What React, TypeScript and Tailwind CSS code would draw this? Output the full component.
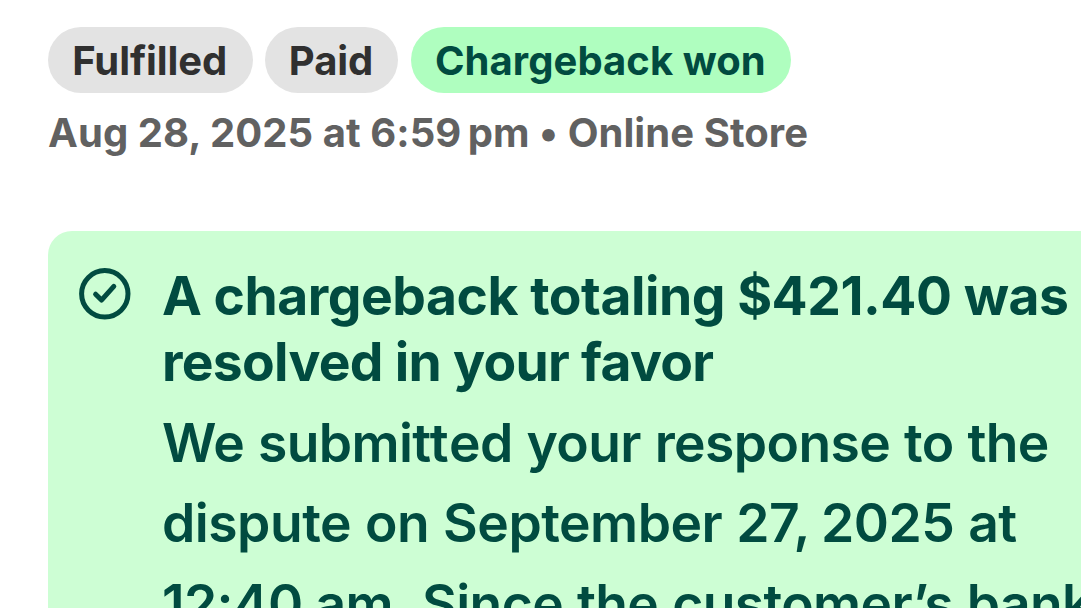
const badges = [
  { label: "Fulfilled", className: "w-[204.5px] bg-[#e3e3e3] text-[#303030] tracking-[-0.1px]" },
  { label: "Paid", className: "w-[133.5px] bg-[#e3e3e3] text-[#303030] tracking-[-0.05px]" },
  { label: "Chargeback won", className: "w-[380.5px] bg-[#affebf] text-[#014b40] tracking-[0.05px]" },
];

function CheckCircle() {
  return (
    <svg viewBox="0 0 52 52" className="h-[52px] w-[52px]" fill="none" stroke="#014b40" aria-hidden>
      <circle cx="25.8" cy="25.8" r="23.2" strokeWidth="5" />
      <path d="M16.6 26.2L22.5 32.1L34.8 18.3" strokeWidth="5" strokeLinecap="round" strokeLinejoin="round" />
    </svg>
  );
}

export default function App() {
  return (
    <main className="h-[608px] w-[1081px] overflow-hidden bg-white pl-12 pt-[27px] font-['Inter',sans-serif]">
      <div className="flex gap-[12.3px]">
        {badges.map((b) => (
          <span
            key={b.label}
            className={`flex h-[66px] items-center justify-center rounded-full pt-px pr-px text-[40px] font-bold whitespace-nowrap ${b.className}`}
          >
            {b.label}
          </span>
        ))}
      </div>
      <p className="mt-[10px] h-[60px] text-[40px] leading-[60px] font-bold tracking-[0.06px] whitespace-nowrap text-[#616161]">
        Aug 28, 2025 at 6:59{"\u202f"}pm • Online Store
      </p>
      <section className="mt-[68px] flex h-[500px] w-[1200px] rounded-tl-[24px] bg-[#cdfed4] pl-[31px] pt-[32px] text-[#014b40]">
        <div className="mt-[5px] shrink-0">
          <CheckCircle />
        </div>
        <div className="ml-[31px] whitespace-nowrap">
          <h2 className="text-[53.4px] leading-[66px] font-bold">
            <span className="tracking-[-0.47px]">A chargeback totaling $421.40 was</span>
            <br />
            <span className="tracking-[-0.7px]">resolved in your favor</span>
          </h2>
          <p className="mt-[7.75px] text-[53.4px] leading-[80.5px] font-[600] tracking-[-0.61px] [word-spacing:1px]">
            We submi<span className="tracking-[0.3px]">tt</span>ed your response to the
            <br />
            <span className="tracking-[-0.5px]">
              dispute on September 2<span className="tracking-[-6.2px]">7</span>
              <span className="tracking-[-1.5px]">, </span>2025 at
            </span>
            <br />
            12:40<span className="tracking-[4px]">{"\u202f"}</span>am. Since the customer’s bank
          </p>
        </div>
      </section>
    </main>
  );
}
